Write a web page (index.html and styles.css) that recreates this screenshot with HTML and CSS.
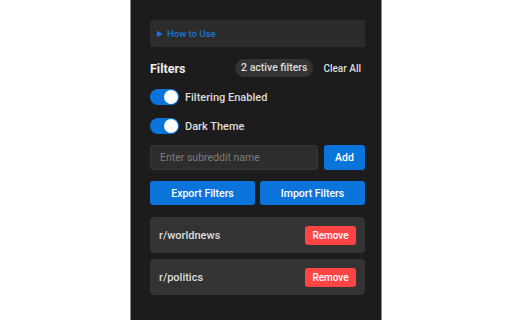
FILE: index.html
```html
<!DOCTYPE html>
<html>
<head>
	<title>Subreddit Filter</title>
	<link rel="stylesheet" href="styles.css">
</head>
<body>
	<div class="panel">
		<div class="help"><span class="arrow">&#9654;</span> How to Use</div>

		<div class="header">
			<h2>Filters</h2>
			<span class="badge">2 active filters</span>
			<button class="clear">Clear All</button>
		</div>

		<label class="toggle-row">
			<span class="toggle"><span class="knob"></span></span>
			Filtering Enabled
		</label>
		<label class="toggle-row">
			<span class="toggle"><span class="knob"></span></span>
			Dark Theme
		</label>

		<div class="add-row">
			<input type="text" placeholder="Enter subreddit name">
			<button class="btn add">Add</button>
		</div>

		<div class="io-row">
			<button class="btn">Export Filters</button>
			<button class="btn">Import Filters</button>
		</div>

		<div class="list">
			<div class="item">
				<span>r/worldnews</span>
				<button class="remove">Remove</button>
			</div>
			<div class="item">
				<span>r/politics</span>
				<button class="remove">Remove</button>
			</div>
		</div>
	</div>
</body>
</html>
```

FILE: styles.css
```css
body {
	margin: 0;
	background-color: #fff;
	display: flex;
	justify-content: center;
	font-family: Roboto, "Liberation Sans", sans-serif;
}

.panel {
	box-sizing: border-box;
	width: 252px;
	height: 320px;
	padding: 20px 16px 0 19px;
	background-color: #1c1c1c;
	border-left: 1px solid #8a8a8a;
	border-right: 1px solid #8a8a8a;
	display: flex;
	flex-direction: column;
	color: #ddd;
}

.help {
	height: 27px;
	box-sizing: border-box;
	padding-left: 7px;
	display: flex;
	align-items: center;
	background-color: #2c2c2c;
	border-radius: 3px;
	color: #1a73d9;
	font-size: 9.5px;
	font-weight: 500;
	margin-bottom: 12px;
}

.arrow {
	font-size: 8px;
	margin-right: 4px;
}

.header {
	display: flex;
	align-items: center;
	height: 18px;
	margin-bottom: 12px;
}

.header h2 {
	margin: 0;
	flex: 1;
	font-size: 12.5px;
	font-weight: 700;
	color: #eee;
}

.badge {
	height: 18px;
	line-height: 18px;
	padding: 0 6px;
	border-radius: 9px;
	background-color: #333;
	font-size: 10.5px;
	font-weight: 500;
	color: #ddd;
}

.clear {
	margin-left: 6px;
	padding: 0 4px;
	background: none;
	border: none;
	color: #ddd;
	font-family: inherit;
	font-size: 10px;
	font-weight: 500;
}

.toggle-row {
	display: flex;
	align-items: center;
	gap: 6px;
	height: 16px;
	font-size: 11px;
	font-weight: 500;
	margin-bottom: 13px;
}

.toggle {
	width: 29px;
	height: 16px;
	border-radius: 8px;
	background-color: #0a74da;
	display: flex;
	justify-content: flex-end;
	align-items: center;
	padding: 0 1px;
	box-sizing: border-box;
}

.knob {
	width: 14px;
	height: 14px;
	border-radius: 50%;
	background-color: #fff;
}

.add-row {
	display: flex;
	gap: 6px;
	margin-top: -2px;
	margin-bottom: 11px;
}

.add-row input {
	flex: 1;
	min-width: 0;
	height: 25px;
	box-sizing: border-box;
	padding: 0 9px;
	background-color: #2d2d2d;
	border: 1px solid #363636;
	border-radius: 3px;
	color: #ddd;
	font-family: inherit;
	font-size: 10.5px;
}

.add-row input::placeholder {
	color: #7c7c7c;
}

.btn {
	height: 24px;
	border: none;
	border-radius: 3px;
	background-color: #0a74da;
	color: #fff;
	font-family: inherit;
	font-size: 10.5px;
	font-weight: 500;
}

.btn.add {
	width: 41px;
	height: 25px;
}

.io-row {
	display: flex;
	gap: 5px;
	margin-bottom: 12px;
}

.io-row .btn {
	flex: 1;
}

.list {
	display: flex;
	flex-direction: column;
	gap: 6px;
}

.item {
	height: 36px;
	box-sizing: border-box;
	padding: 0 9px;
	display: flex;
	align-items: center;
	justify-content: space-between;
	background-color: #333;
	border-radius: 4px;
	font-size: 11px;
	font-weight: 500;
}

.remove {
	width: 51px;
	height: 19px;
	border: none;
	border-radius: 3px;
	background-color: #ff4444;
	color: #fff;
	font-family: inherit;
	font-size: 10px;
	font-weight: 500;
}
```
